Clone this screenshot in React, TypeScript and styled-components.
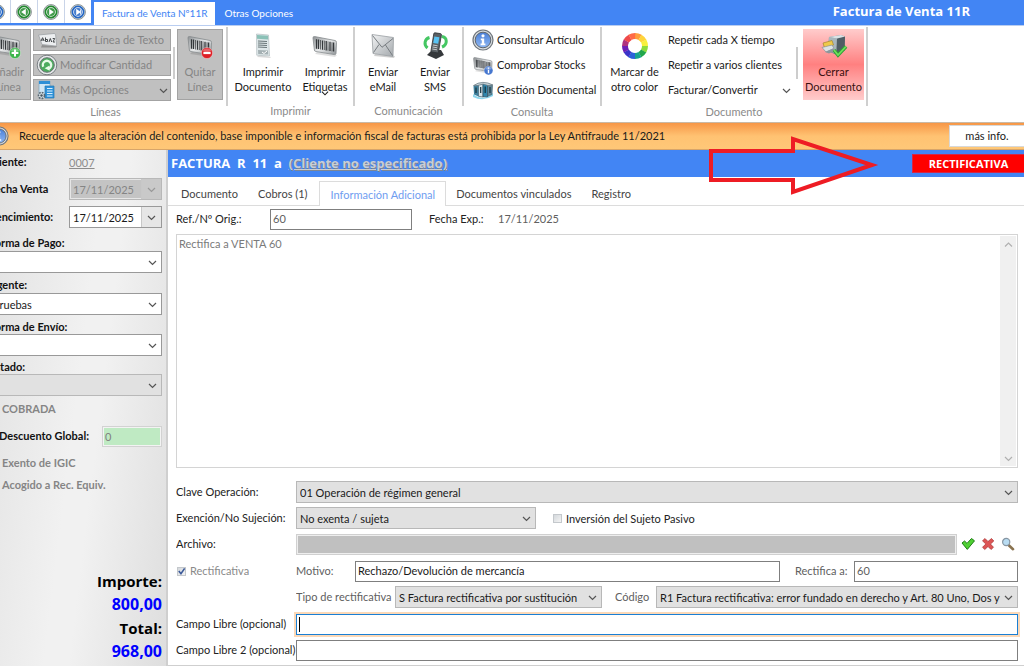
import React from "react";
import styled, { createGlobalStyle, css } from "styled-components";

const GlobalStyle = createGlobalStyle`
  *, *::before, *::after { box-sizing: border-box; }
  html, body { margin: 0; padding: 0; }
  body {
    overflow-x: hidden;
    background: #fff;
    color: #1a1a1a;
    font-family: Lato, "Open Sans", sans-serif;
    font-size: 11px;
    line-height: 15px;
  }
  button, input, select, textarea { font: inherit; color: inherit; border-radius: 0; margin: 0; }
  button { padding: 0; border: 0; background: none; white-space: nowrap; }
  svg { display: block; flex: none; }
`;

/* The window is scrolled slightly to the right: its left edge lies off screen. */
const Shell = styled.div`
  display: flex;
  flex-direction: column;
  min-height: 100vh;
  margin-left: -15px;
  overflow: hidden;
`;

/* ---------- title bar ---------- */
const TitleBar = styled.header`
  display: flex;
  height: 25px;
  background: #4285f4;
  color: #fff;
`;
const NavCells = styled.nav`
  display: flex;
  gap: 1px;
  height: 23px;
  background: #c9d4e8;
  margin: 0 3px 0 -1px;
`;
const NavCell = styled.button`
  display: flex;
  align-items: center;
  justify-content: center;
  width: 26px;
  background: #fff;
`;
const TopTab = styled.button<{ $active?: boolean }>`
  margin-top: 2px;
  font-size: 10px;
  ${(p) => (p.$active ? css`padding: 0 8px; background: #fff; color: #4285f4;` : css`padding: 0 9px; color: #fff;`)}
`;
const WindowTitle = styled.h1`
  margin: 0 54px 0 auto;
  font: bold 13px/23px "Open Sans", sans-serif;
`;

/* ---------- ribbon ---------- */
const Ribbon = styled.div`
  display: flex;
  height: 97px;
  background: #fff;
  border-top: 1px solid #b9cdf0;
`;
const Group = styled.section<{ $w: number }>`
  display: flex;
  flex-direction: column;
  width: ${(p) => p.$w}px;
  flex: none;
`;
const GroupBody = styled.div<{ $pad?: number; $gap?: number }>`
  display: flex;
  gap: ${(p) => p.$gap ?? 2}px;
  height: 75px;
  padding: 3px 0 0 ${(p) => p.$pad ?? 0}px;
`;
const GroupName = styled.h2`
  margin: 0;
  font-size: 11px;
  font-weight: normal;
  line-height: 22px;
  color: #8a8a8a;
  text-align: center;
`;
const Separator = styled.div`
  width: 2px;
  height: 79px;
  margin-top: 1px;
  background: #cfcfcf;
  flex: none;
`;
const BigButton = styled.button<{ $w: number; $tone?: "disabled" | "danger" }>`
  position: relative;
  display: flex;
  flex-direction: column;
  align-items: center;
  width: ${(p) => p.$w}px;
  height: 71px;
  padding-top: 3px;
  gap: 4px;
  flex: none;
  ${(p) =>
    p.$tone === "disabled" &&
    css`
      background: #c0c0c0;
      border: 1px solid #a3a3a3;
      color: #858585;
      padding-top: 2px;
    `}
  ${(p) =>
    p.$tone === "danger" &&
    css`
      background: linear-gradient(#ffcccc, #ff8080 50%, #ffcccc);
      color: #3a1010;
    `}
`;
const DropMark = styled.span`
  position: absolute;
  left: 50%;
  top: 60px;
  margin-left: -4px;
`;
const Stack = styled.div<{ $w?: number }>`
  display: flex;
  flex-direction: column;
  gap: 3px;
  width: ${(p) => (p.$w ? p.$w + "px" : "auto")};
`;
const RowButton = styled.button<{ $disabled?: boolean }>`
  display: flex;
  align-items: center;
  gap: 3px;
  height: 22px;
  text-align: left;
  ${(p) =>
    p.$disabled &&
    css`
      background: #c0c0c0;
      border: 1px solid #a3a3a3;
      color: #858585;
      padding: 0 2px;
      gap: 2px;
    `}
`;
const RowText = styled.span`
  padding-bottom: 2px;
`;
const Push = styled.span`
  margin-left: auto;
  color: #555;
`;
const MiniScroll = styled.div`
  width: 2px;
  height: 32px;
  margin-top: 18px;
  background: #cdcdcd;
  flex: none;
`;

/* ---------- notice ---------- */
const Notice = styled.div`
  display: flex;
  align-items: center;
  height: 28px;
  border-top: 1px solid #c9b9a6;
  border-bottom: 1px solid #d8a569;
  background: linear-gradient(#f79646, #ffc272 50%, #ffc878);
  padding-left: 4px;
  gap: 10px;
`;
const NoticeText = styled.p`
  margin: 0;
  padding-bottom: 2px;
  white-space: nowrap;
`;
const MoreInfo = styled.button`
  margin-left: auto;
  width: 75px;
  height: 22px;
  padding-bottom: 2px;
  background: #fff;
  border: 1px solid #d8d8d8;
  border-right: 0;
`;

/* ---------- columns ---------- */
const Columns = styled.div`
  display: flex;
  flex: 1;
`;
const Sidebar = styled.aside`
  display: flex;
  flex-direction: column;
  width: 183px;
  flex: none;
  padding: 1px 4px 3px 4px;
  background: linear-gradient(97deg, #e0e0e0, #f1f1f1 50%, #f1f1f1 60%, #dedede);
  border-right: 2px solid #cfcfcf;
`;
const SideRow = styled.div<{ $h: number; $indent?: number }>`
  display: flex;
  align-items: center;
  height: ${(p) => p.$h}px;
  padding-left: ${(p) => p.$indent ?? 0}px;
`;
const SideLabel = styled.label<{ $w?: number; $h?: number }>`
  font-weight: bold;
  color: #111;
  white-space: nowrap;
  width: ${(p) => (p.$w ? p.$w + "px" : "auto")};
  line-height: ${(p) => p.$h ?? 16}px;
  flex: none;
`;
const ClientLink = styled.a`
  color: #8c8c8c;
`;
const Fields = styled.div`
  display: flex;
  flex-direction: column;
  gap: 4px;
  padding-top: 6px;
`;
const SideField = styled.div`
  display: flex;
  flex-direction: column;
`;
const SideCheck = styled.label<{ $h: number }>`
  display: flex;
  align-items: center;
  height: ${(p) => p.$h}px;
  color: #858585;
  font-weight: bold;
  gap: 4px;
`;
const Discount = styled.input`
  width: 60px;
  height: 21px;
  margin-left: auto;
  padding: 0 2px;
  border: 1px solid #d2d2d2;
  outline: 0;
  box-shadow: inset 0 0 0 1px #f3f3f3;
  background: #bfeac3;
  color: #808080;
`;
const Totals = styled.dl`
  margin: auto 0 0;
  text-align: right;
  font: bold 16px/24px "Open Sans", sans-serif;
  color: #000;
`;
const Term = styled.dt`
  font-size: 15px;
`;
const Amount = styled.dd`
  margin: 0;
  color: #0000ff;
  line-height: 23px;
`;

/* ---------- document ---------- */
const Doc = styled.main`
  position: relative;
  display: flex;
  flex-direction: column;
  flex: 1;
  min-width: 0;
`;
const DocHeader = styled.div`
  display: flex;
  align-items: center;
  height: 27px;
  padding-left: 3px;
  background: #4285f4;
  color: #fff;
  font: bold 13px/27px "Open Sans", sans-serif;
  white-space: pre;
`;
const DocClient = styled.a`
  color: #c8cdd6;
  text-shadow: 1px 1px 0 #7e8794;
`;
const Badge = styled.strong`
  margin-left: auto;
  width: 112px;
  height: 19px;
  background: #ff0000;
  border: 1px solid #d0284a;
  border-right: 0;
  font: bold 11px/17px "Open Sans", sans-serif;
  text-align: center;
`;
const Arrow = styled.svg`
  position: absolute;
  right: 144px;
  top: -16px;
`;
const Tabs = styled.div`
  display: flex;
  height: 29px;
  padding-top: 4px;
  border-bottom: 1px solid #dcdcdc;
`;
const Tab = styled.button<{ $active?: boolean }>`
  height: 25px;
  padding: 0 10px;
  color: #444;
  ${(p) =>
    p.$active &&
    css`
      background: #fff;
      color: #6f9df0;
      border: 1px solid #dcdcdc;
      border-bottom: 0;
    `}
`;
const Pane = styled.div`
  display: flex;
  flex-direction: column;
  flex: 1;
  padding: 2px 6px 4px 8px;
  border-bottom: 1px solid #cfcfcf;
`;
const Line = styled.div`
  display: flex;
  align-items: center;
  height: 22px;
`;
const Caption = styled.label<{ $w?: number; $soft?: boolean }>`
  width: ${(p) => (p.$w ? p.$w + "px" : "auto")};
  flex: none;
  padding-bottom: 2px;
  white-space: nowrap;
  overflow: hidden;
  color: ${(p) => (p.$soft ? "#606060" : "#222")};
`;
const Input = styled.input<{ $w?: number; $focus?: boolean; $archive?: boolean; $soft?: boolean }>`
  ${(p) => (p.$w ? `width: ${p.$w}px; flex: none;` : "flex: 1; min-width: 0; width: 100%;")}
  height: 21px;
  padding: 0 2px 2px;
  border: 1px solid #7f7f7f;
  background: #fff;
  outline: 0;
  color: ${(p) => (p.$soft ? "#606060" : "#1a1a1a")};
  ${(p) => p.$focus && css`border-color: #1a7fd4; box-shadow: 0 0 0 2px #fcd9b8;`}
  ${(p) => p.$archive && css`border-color: #d0d0d0; background: #c0c0c0; box-shadow: inset 0 0 0 1px #eee;`}
`;
const CaretBox = styled.div`
  position: relative;
  display: flex;
  flex: 1;
  &::after {
    content: "";
    position: absolute;
    left: 3px;
    top: 3px;
    width: 1px;
    height: 15px;
    background: #000;
  }
`;
const SelectBox = styled.div<{ $w?: number; $look?: "flat" | "white" | "off" | "date" | "dateOff" }>`
  position: relative;
  display: flex;
  ${(p) => (p.$w ? `width: ${p.$w}px; flex: none;` : "flex: 1 1 auto; min-width: 0;")}
  select {
    appearance: none;
    width: 100%;
    height: 22px;
    padding: 0 16px 0 3px;
    outline: 0;
    opacity: 1;
    border: 1px solid ${(p) => (p.$look === "white" || p.$look === "date" ? "#999" : "#b8b8b8")};
    background: ${(p) => (p.$look === "white" || p.$look === "date" ? "#fff" : p.$look === "dateOff" ? "#c4c4c4" : "#e1e1e1")};
    color: ${(p) => (p.$look === "dateOff" ? "#858585" : "#1a1a1a")};
    ${(p) => p.$look === "dateOff" && css`box-shadow: inset 0 0 0 1px #e6e6e6;`}
  }
`;
const SelectMark = styled.span<{ $boxed?: boolean; $off?: boolean }>`
  position: absolute;
  right: 1px;
  top: 1px;
  display: flex;
  align-items: center;
  justify-content: center;
  width: 17px;
  height: 20px;
  pointer-events: none;
  color: ${(p) => (p.$off ? "#999" : "#555")};
  ${(p) => p.$boxed && css`width: 20px; border-left: 1px solid #c8c8c8; background: ${p.$off ? "#c9c9c9" : "#e6e6e6"};`}
`;
const NoteBox = styled.div`
  display: flex;
  flex: 1;
  margin: 4px 0 13px;
  border: 1px solid #d4d4d4;
`;
const Note = styled.textarea`
  flex: 1;
  resize: none;
  overflow: hidden;
  border: 0;
  outline: 0;
  padding: 1px 2px;
  color: #7a7a7a;
`;
const ScrollTrack = styled.div`
  display: flex;
  flex-direction: column;
  justify-content: space-between;
  width: 16px;
  margin: 1px;
  background: #f0f0f0;
  color: #b0b0b0;
`;
const ScrollButton = styled.button`
  display: flex;
  align-items: center;
  justify-content: center;
  height: 16px;
`;
const Form = styled.form`
  display: flex;
  flex-direction: column;
  gap: 5px;
`;
const FormGroup = styled.div`
  display: flex;
  flex-direction: column;
  gap: 4px;
`;
const Tick = styled.input`
  appearance: none;
  width: 9px;
  height: 9px;
  flex: none;
  border: 1px solid #c4c8cc;
  background: linear-gradient(135deg, #d4d8dc, #f4f4f4);
`;
const TickLabel = styled.label<{ $soft?: boolean; $w?: number }>`
  display: flex;
  align-items: center;
  gap: 4px;
  flex: none;
  width: ${(p) => (p.$w ? p.$w + "px" : "auto")};
  padding-left: ${(p) => (p.$soft ? 1 : 0)}px;
  color: ${(p) => (p.$soft ? "#8a8a8a" : "#222")};
`;
const TickBox = styled.span`
  position: relative;
  display: flex;
`;
const TickMark = styled.svg`
  position: absolute;
  left: 0;
  top: 0;
  pointer-events: none;
`;
const IconButtons = styled.div`
  display: flex;
  gap: 6px;
  padding: 0 3px 0 4px;
`;
const Gap = styled.span<{ $w: number }>`
  width: ${(p) => p.$w}px;
  flex: none;
`;

/* ---------- icons ---------- */
const Chevron = ({ up, size = 9 }: { up?: boolean; size?: number }) => (
  <svg width={size} height={size} viewBox="0 0 9 9" fill="none" stroke="currentColor" strokeWidth="1.2">
    <path d={up ? "M1 6.5 4.5 3 8 6.5" : "M1 3 4.5 6.5 8 3"} />
  </svg>
);

const NavIcon = ({ color, dir, bar }: { color: string; dir: "l" | "r"; bar?: boolean }) => (
  <svg width="18" height="18" viewBox="0 0 18 18">
    <circle cx="9" cy="9" r="7.4" fill="#d3dad6" stroke="#8d9496" strokeWidth="1" />
    <circle cx="9" cy="9" r="5.6" fill="#fff" stroke={color} strokeWidth="1.7" />
    <circle cx="9" cy="9" r="4" fill={color} fillOpacity=".85" />
    <path d={dir === "l" ? "M10.8 5.8v6.4L6.2 9z" : "M7.2 5.8v6.4l4.6-3.2z"} fill="#fff" />
    {bar && <path d={dir === "l" ? "M6.3 6.4v5.2" : "M11.7 6.4v5.2"} stroke="#fff" />}
  </svg>
);

const Barcode = ({ badge, w = 28 }: { badge?: "plus" | "minus" | "info"; w?: number }) => (
  <svg width={w} height={w} viewBox="0 0 28 28">
    <defs>
      <linearGradient id="bc" x1="0" y1="0" x2="1" y2="1">
        <stop offset="0" stopColor="#8b8f92" />
        <stop offset=".5" stopColor="#e8eaeb" />
        <stop offset="1" stopColor="#8f9497" />
      </linearGradient>
    </defs>
    <path d="M4 22 24 25l2-2-20-3z" fill="#000" opacity=".12" />
    <path d="M3.5 4.5 24 8.5q1.6.4 1.5 2l-.5 11q-.2 1.300-1.600 1.100L4.800 19.500q-1.300-.2-1.400-1.500L2 6q-.1-1.700 1.500-1.500z" fill="url(#bc)" stroke="#84898c" strokeWidth=".8" />
    <g stroke="#33373a" strokeWidth="1.300">
      <path d="M5.500 7.200v9.600M7.500 7.600v9.500M11.500 8.400v9.300M15.200 9v9.400M19 9.800v9.200" />
      <path d="M9.500 8v9.500M13.400 8.700v9.300M17 9.400v9.300M21 10.200v9.200" strokeWidth=".7" />
      <path d="M22.600 10.500v9" />
    </g>
    {badge && (
      <g>
        <circle cx="21" cy="21" r="5.600" fill={badge === "plus" ? "#3cb54a" : badge === "minus" ? "#dd1f26" : "#4677cf"} stroke="#fff" strokeOpacity=".6" strokeWidth=".6" />
        <path d="M16.600 19a5 5 0 0 1 8.800 0q-4.400 2-8.800 0z" fill="#fff" opacity=".3" />
        {badge === "plus" && <path d="M21 17.600v6.800M17.600 21h6.800" stroke="#fff" strokeWidth="2" />}
        {badge === "minus" && <path d="M17.400 21h7.200" stroke="#fff" strokeWidth="2.200" />}
        {badge === "info" && <path d="M21 20v4.500M21 17.200v1.600" stroke="#fff" strokeWidth="1.800" />}
      </g>
    )}
  </svg>
);

const InfoIcon = ({ size = 22 }: { size?: number }) => (
  <svg width={size} height={size} viewBox="0 0 22 22">
    <defs>
      <linearGradient id="inf" x1="0" y1="0" x2="0" y2="1">
        <stop offset="0" stopColor="#4a7fd6" />
        <stop offset="1" stopColor="#8fb8f4" />
      </linearGradient>
    </defs>
    <circle cx="11" cy="11" r="10" fill="#d8dcdf" stroke="#6f757b" strokeWidth="1.200" />
    <circle cx="11" cy="11" r="7.800" fill="url(#inf)" stroke="#60676e" />
    <circle cx="11" cy="6.800" r="1.600" fill="#fff" />
    <path d="M8.800 9.600h3.400v5h1.200v1.600H8.600v-1.600h1.200v-3.400h-1z" fill="#fff" />
  </svg>
);

const TextLineIcon = () => (
  <svg width="22" height="18" viewBox="0 0 22 18">
    <path d="M5 16.500h15l1-1.500-15-1z" fill="#000" opacity=".25" />
    <path d="M2.500 4 18 2.500q1.500 0 1.600 1.200l1 10.300q0 1-1.200 1L6 13.500z" fill="#eceef0" stroke="#9da1a4" strokeWidth=".8" />
    <path d="m5 10 1.600-3.300L8.200 10M5.700 9h2M9.500 6.500v4M9.500 8.500h2v2h-2M13 11l1.300-3.500 1.400 3.500M16.700 7.500h2L17 11h2" stroke="#44484b" fill="none" />
  </svg>
);

const ModifyIcon = () => (
  <svg width="22" height="22" viewBox="0 0 22 22">
    <circle cx="11" cy="11" r="9.800" fill="#e6e9ea" stroke="#7b8085" />
    <circle cx="11" cy="11" r="7.300" fill="#4cab5e" stroke="#6d7377" />
    <path d="M7.200 12.800A4.200 4.200 0 1 1 13 14.700" fill="none" stroke="#e8fbe9" strokeWidth="2.400" />
    <path d="m8.600 14.200 5-2.800v5.400z" fill="#e8fbe9" />
  </svg>
);

const OptionsIcon = () => (
  <svg width="22" height="20" viewBox="0 0 22 20">
    <path d="M3 1h11v14H3z" fill="#cfe6f5" stroke="#7ea3bd" strokeWidth=".7" />
    <path d="M3 1h11v3H3z" fill="#2d8fd6" />
    <path d="M9 6h9v12H9z" fill="#2f93da" stroke="#2278b5" strokeWidth=".7" />
    <path d="M11 8.500h5.500M11 11h5.500M11 13.500h5.500M11 16h5.500" stroke="#d9efff" />
    <circle cx="5.500" cy="15.500" r="3" fill="#d9e2e8" stroke="#596872" strokeWidth="1.600" strokeDasharray="1.800 1" />
    <circle cx="5.500" cy="15.500" r="1.200" fill="#47545c" />
  </svg>
);

const DocumentIcon = () => (
  <svg width="28" height="28" viewBox="0 0 28 28">
    <path d="m8 25 13 1 1-1-12-2z" fill="#000" opacity=".15" />
    <path d="m7.500 2 12 1 1 21-12.800-.8z" fill="#dfe8ea" stroke="#b4bfc2" strokeWidth=".7" />
    <path d="m8 3 11 .8.200 3.700L8 6.800z" fill="#8bc1b7" />
    <path d="m9 9 9 .5M9 11l9 .5M9 13l9 .5m-9 1.500 9 .5" stroke="#6a7679" strokeWidth="1.200" />
    <path d="m9 18 10 .5.200 4-10-.5z" fill="#a5b1b4" />
    <path d="m13 20 2 1.500 3-2.500" stroke="#fff" fill="none" />
  </svg>
);

const MailIcon = () => (
  <svg width="28" height="28" viewBox="0 0 28 28">
    <defs>
      <linearGradient id="ml" x1="0" y1="0" x2="1" y2="1">
        <stop offset="0" stopColor="#f2f3f4" />
        <stop offset="1" stopColor="#a4a9ad" />
      </linearGradient>
    </defs>
    <path d="m5 24 20 2 1-2-20-2z" fill="#000" opacity=".18" />
    <path d="m3 2.500 21.500 3-.5 19L4 21.500z" fill="url(#ml)" stroke="#9a9fa3" strokeWidth=".8" />
    <path d="m3.500 3.500 9.500 11.800L24 6.500M4.500 20.500l5.500-8M23.500 23.500l-7-10.500" fill="none" stroke="#777c80" />
  </svg>
);

const PhoneIcon = () => (
  <svg width="28" height="28" viewBox="0 0 28 28">
    <path d="M8.500 5.500C3.500 7 2.500 12.500 6.500 16M20.500 4.500c6 .5 6.500 8 .5 10.500" fill="none" stroke="#45c763" strokeWidth="3" />
    <path d="m6 23 5-5h9l3 5-8 4z" fill="#35383b" />
    <path d="m14 .8 5.500.8q1 .2.900 1.200L17.500 20q-.2 1-1.200.9l-5.500-1q-1-.2-.8-1.200L12.800 1.700q.2-1 1.200-.9z" fill="#5a6064" stroke="#2c3033" strokeWidth=".8" />
    <path d="m13.400 4.500 5 .8-1.200 6.500-5-.8z" fill="#59c3f3" />
    <path d="m11.800 13 4.800.8m-5.100 1.200 4.800.8m-5 1.200 4.700.8" stroke="#c2c8cc" strokeWidth="1" />
  </svg>
);

const BindersIcon = () => (
  <svg width="22" height="20" viewBox="0 0 22 20">
    <path d="M1 14q10 8 20-1v3q-10 6-20 1z" fill="#6fcbe9" opacity=".8" />
    <path d="m1.500 6 5-1.500v12L2 14.500z" fill="#3f7f9b" />
    <path d="m6.500 4.500 4.500-1v13.500l-4.500-.7z" fill="#d6e4ea" stroke="#345b6e" strokeWidth=".7" />
    <path d="M11 3.500h4.500v13.300H11z" fill="#2e86ad" stroke="#2a4b5b" strokeWidth=".7" />
    <path d="m15.500 3.500 5 2-.5 9-4.500 2z" fill="#5f8596" stroke="#2a4b5b" strokeWidth=".5" />
    <path d="M8.700 7v6M13.200 6.500v6.500M18 7v6M4 7.500V13" stroke="#16313d" strokeWidth="1.200" />
    <path d="M1.500 5.500q9-6 19.500-.5l-5 .5-5-1.500-5 1.500z" fill="#c8d4d9" stroke="#62737b" strokeWidth=".7" />
  </svg>
);

const wheel = ["#ff9f3c", "#ffd43b", "#f7f03c", "#8ddc3b", "#22a64b", "#16a38f", "#2b62d9", "#3a34c9", "#6d1fb5", "#b0317f", "#ef4a4a", "#ff6b47"];
const WheelIcon = () => (
  <svg width="28" height="28" viewBox="0 0 28 28">
    {wheel.map((c, i) => {
      const a = ((i * 30 - 90) * Math.PI) / 180;
      const b = (((i + 1) * 30 - 89) * Math.PI) / 180;
      return (
        <path
          key={c}
          d={`M${14 + 10 * Math.cos(a)} ${14 + 10 * Math.sin(a)}A10 10 0 0 1 ${14 + 10 * Math.cos(b)} ${14 + 10 * Math.sin(b)}`}
          stroke={c}
          strokeWidth="6"
          fill="none"
        />
      );
    })}
  </svg>
);

const CloseDocIcon = () => (
  <svg width="28" height="28" viewBox="0 0 28 28">
    <path d="m9 5 12-2 4 1.500-.5 14-9 4L8 19z" fill="#76858d" />
    <path d="m9 5 8 1.500-.5 15L8 19z" fill="#a9b6bc" />
    <path d="m17 6.500 8-2-.5 14-8 3z" fill="#505d64" />
    <path d="m9 5 12-2 4 1.500-8 2z" fill="#dbe2e5" />
    <path d="m3 11 9-2.500 1.500 4.500-9 3z" fill="#efc94a" stroke="#9b7e24" strokeWidth=".6" />
    <path d="m2 15.500 10-2.500 2 3.500-8 3.500z" fill="#dde3e5" stroke="#7c878d" strokeWidth=".6" />
    <path d="m5 20 8-3.500 2 2-6 3z" fill="#8b979d" />
    <path d="m14 18 4 5L26 14.500" fill="none" stroke="#2f9e35" strokeWidth="3.600" />
    <path d="m14 18 4 5L26 14.500" fill="none" stroke="#6fe05c" strokeWidth="1.800" />
  </svg>
);

const CheckIcon = () => (
  <svg width="14" height="14" viewBox="0 0 14 14">
    <path d="M1 6 3.600 4l2.400 2.400L10.500 1.500l3 2.300-7.200 8.600z" fill="#4fd033" stroke="#1c7d14" />
  </svg>
);
const CrossIcon = () => (
  <svg width="14" height="14" viewBox="0 0 14 14">
    <path d="M1.500 3.800 4 1.500 7 4.500l3.500-3L12.800 4 9.500 7l3 3.300-2.500 2.200-3-3-3.200 3-2.300-2.200L4.800 7z" fill="#dd5555" stroke="#a83232" strokeWidth=".7" />
  </svg>
);
const LensIcon = () => (
  <svg width="14" height="14" viewBox="0 0 14 14">
    <path d="m7.500 8 4.500 4.200" stroke="#8a7350" strokeWidth="2.600" strokeLinecap="round" />
    <circle cx="5.200" cy="5" r="3.600" fill="#b9dcf2" stroke="#8796a3" strokeWidth="1.200" />
  </svg>
);

type Look = "flat" | "white" | "off" | "date" | "dateOff";
const Select = ({ id, value, w, look = "flat" }: { id: string; value: string; w?: number; look?: Look }) => (
  <SelectBox $w={w} $look={look}>
    <select id={id} defaultValue={value} disabled={look === "off" || look === "dateOff"}>
      <option value={value}>{value}</option>
    </select>
    <SelectMark $boxed={look === "date" || look === "dateOff"} $off={look === "dateOff"}>
      <Chevron />
    </SelectMark>
  </SelectBox>
);

export default function App() {
  return (
    <>
      <GlobalStyle />
      <Shell>
        <TitleBar>
          <NavCells>
            <NavCell aria-label="Primero"><NavIcon color="#2466c4" dir="l" bar /></NavCell>
            <NavCell aria-label="Anterior"><NavIcon color="#238a2e" dir="l" /></NavCell>
            <NavCell aria-label="Siguiente"><NavIcon color="#238a2e" dir="r" /></NavCell>
            <NavCell aria-label="Último"><NavIcon color="#2466c4" dir="r" bar /></NavCell>
          </NavCells>
          <TopTab $active>Factura de Venta Nº11R</TopTab>
          <TopTab>Otras Opciones</TopTab>
          <WindowTitle>Factura de Venta 11R</WindowTitle>
        </TitleBar>

        <Ribbon>
          <Group $w={241}>
            <GroupBody>
              <BigButton $w={46} $tone="disabled"><Barcode badge="plus" /><span>Añadir<br />Línea</span></BigButton>
              <Stack $w={138}>
                <RowButton $disabled><TextLineIcon /><RowText>Añadir Línea de Texto</RowText></RowButton>
                <RowButton $disabled><ModifyIcon /><RowText>Modificar Cantidad</RowText></RowButton>
                <RowButton $disabled><OptionsIcon /><RowText>Más Opciones</RowText><Push><Chevron /></Push></RowButton>
              </Stack>
              <MiniScroll />
              <BigButton $w={46} $tone="disabled"><Barcode badge="minus" /><span>Quitar<br />Línea</span></BigButton>
            </GroupBody>
            <GroupName>Líneas</GroupName>
          </Group>
          <Separator />
          <Group $w={125}>
            <GroupBody $pad={4}>
              <BigButton $w={62}><DocumentIcon /><span>Imprimir<br />Documento</span></BigButton>
              <BigButton $w={58}><Barcode /><span>Imprimir<br />Etiquetas</span><DropMark><Chevron size={8} /></DropMark></BigButton>
            </GroupBody>
            <GroupName>Imprimir</GroupName>
          </Group>
          <Separator />
          <Group $w={107}>
            <GroupBody $pad={3}>
              <BigButton $w={50}><MailIcon /><span>Enviar<br />eMail</span></BigButton>
              <BigButton $w={50}><PhoneIcon /><span>Enviar<br />SMS</span></BigButton>
            </GroupBody>
            <GroupName>Comunicación</GroupName>
          </Group>
          <Separator />
          <Group $w={136}>
            <GroupBody $pad={8}>
              <Stack>
                <RowButton><InfoIcon /><RowText>Consultar Artículo</RowText></RowButton>
                <RowButton><Barcode badge="info" w={22} /><RowText>Comprobar Stocks</RowText></RowButton>
                <RowButton><BindersIcon /><RowText>Gestión Documental</RowText></RowButton>
              </Stack>
            </GroupBody>
            <GroupName>Consulta</GroupName>
          </Group>
          <Separator />
          <Group $w={264}>
            <GroupBody $pad={4} $gap={5}>
              <BigButton $w={57}><WheelIcon /><span>Marcar de<br />otro color</span></BigButton>
              <Stack $w={123}>
                <RowButton><RowText>Repetir cada X tiempo</RowText></RowButton>
                <RowButton><RowText>Repetir a varios clientes</RowText></RowButton>
                <RowButton><RowText>Facturar/Convertir</RowText><Push><Chevron /></Push></RowButton>
              </Stack>
              <MiniScroll />
              <BigButton $w={61} $tone="danger"><CloseDocIcon /><span>Cerrar<br />Documento</span></BigButton>
            </GroupBody>
            <GroupName>Documento</GroupName>
          </Group>
          <Separator />
        </Ribbon>

        <Notice>
          <InfoIcon size={20} />
          <NoticeText>
            Recuerde que la alteración del contenido, base imponible e información fiscal de facturas está prohibida por la Ley Antifraude 11/2021
          </NoticeText>
          <MoreInfo>más info.</MoreInfo>
        </Notice>

        <Columns>
          <Sidebar>
            <SideRow $h={22}>
              <SideLabel as="span" $w={80}>Cliente:</SideLabel>
              <ClientLink href="#cliente">0007</ClientLink>
            </SideRow>
            <SideRow $h={32}>
              <SideLabel htmlFor="fecha" $w={80}>Fecha Venta</SideLabel>
              <Select id="fecha" value="17/11/2025" look="dateOff" />
            </SideRow>
            <SideRow $h={24}>
              <SideLabel htmlFor="venc" $w={80}>Vencimiento:</SideLabel>
              <Select id="venc" value="17/11/2025" look="date" />
            </SideRow>
            <Fields>
              <SideField><SideLabel htmlFor="pago">Forma de Pago:</SideLabel><Select id="pago" value="" look="white" /></SideField>
              <SideField><SideLabel htmlFor="agente">Agente:</SideLabel><Select id="agente" value="Pruebas" look="white" /></SideField>
              <SideField><SideLabel htmlFor="envio" $h={15}>Forma de Envío:</SideLabel><Select id="envio" value="" look="white" /></SideField>
              <SideField><SideLabel htmlFor="estado" $h={14}>Estado:</SideLabel><Select id="estado" value="" look="off" /></SideField>
            </Fields>
            <SideCheck $h={24}><Tick type="checkbox" disabled />COBRADA</SideCheck>
            <SideRow $h={32} $indent={10}>
              <SideLabel htmlFor="dto">Descuento Global:</SideLabel>
              <Discount id="dto" defaultValue="0" />
            </SideRow>
            <SideCheck $h={20}><Tick type="checkbox" disabled />Exento de IGIC</SideCheck>
            <SideCheck $h={24}><Tick type="checkbox" disabled />Acogido a Rec. Equiv.</SideCheck>
            <Totals>
              <Term>Importe:</Term>
              <Amount>800,00</Amount>
              <Term>Total:</Term>
              <Amount>968,00</Amount>
            </Totals>
          </Sidebar>

          <Doc>
            <DocHeader>
              <span>{"FACTURA  R  11  a  "}</span>
              <DocClient href="#cliente">(Cliente no especificado)</DocClient>
              <Badge>RECTIFICATIVA</Badge>
            </DocHeader>
            <Arrow width="172" height="64" viewBox="0 0 172 64" fill="none" stroke="#ee1c24" strokeWidth="4">
              <path d="M3 17h82V5l79 26-79 27V46H3z" />
            </Arrow>
            <Tabs>
              <Gap $w={3} />
              <Tab>Documento</Tab>
              <Tab>Cobros (1)</Tab>
              <Gap $w={2} />
              <Tab $active>Información Adicional</Tab>
              <Tab>Documentos vinculados</Tab>
              <Tab>Registro</Tab>
            </Tabs>
            <Pane>
              <Line>
                <Caption htmlFor="ref" $w={94}>Ref./Nº Orig.:</Caption>
                <Input id="ref" $w={142} $soft defaultValue="60" />
                <Gap $w={17} />
                <Caption as="span" $w={69}>Fecha Exp.:</Caption>
                <Caption as="span" $soft>17/11/2025</Caption>
              </Line>
              <NoteBox>
                <Note aria-label="Observaciones" readOnly defaultValue="Rectifica a VENTA 60" />
                <ScrollTrack>
                  <ScrollButton aria-label="Subir"><Chevron up /></ScrollButton>
                  <ScrollButton aria-label="Bajar"><Chevron /></ScrollButton>
                </ScrollTrack>
              </NoteBox>
              <Form>
                <FormGroup>
                  <Line>
                    <Caption htmlFor="clave" $w={120}>Clave Operación:</Caption>
                    <Select id="clave" value="01 Operación de régimen general" />
                  </Line>
                  <Line>
                    <Caption htmlFor="exen" $w={120}>Exención/No Sujeción:</Caption>
                    <Select id="exen" w={240} value="No exenta / sujeta" />
                    <Gap $w={17} />
                    <TickLabel><Tick type="checkbox" />Inversión del Sujeto Pasivo</TickLabel>
                  </Line>
                  <Line>
                    <Caption htmlFor="archivo" $w={120}>Archivo:</Caption>
                    <Input id="archivo" $archive readOnly />
                    <IconButtons>
                      <button type="button" aria-label="Aceptar"><CheckIcon /></button>
                      <button type="button" aria-label="Borrar"><CrossIcon /></button>
                      <button type="button" aria-label="Ver"><LensIcon /></button>
                    </IconButtons>
                  </Line>
                </FormGroup>
                <FormGroup>
                  <Line>
                    <TickLabel $soft $w={120}>
                      <TickBox>
                        <Tick type="checkbox" defaultChecked disabled />
                        <TickMark width="9" height="9" viewBox="0 0 10 10" fill="none" stroke="#3c5a9a" strokeWidth="1.800">
                          <path d="m2 4.500 2.400 3L8.500 1.500" />
                        </TickMark>
                      </TickBox>
                      <RowText>Rectificativa</RowText>
                    </TickLabel>
                    <Caption htmlFor="motivo" $soft $w={59}>Motivo:</Caption>
                    <Input id="motivo" defaultValue="Rechazo/Devolución de mercancía" />
                    <Gap $w={15} />
                    <Caption htmlFor="recta" $soft $w={59}>Rectifica a:</Caption>
                    <Input id="recta" $w={164} $soft defaultValue="60" />
                  </Line>
                  <Line>
                    <Gap $w={120} />
                    <Caption htmlFor="tipo" $soft $w={99}>Tipo de rectificativa</Caption>
                    <Select id="tipo" w={207} value="S Factura rectificativa por sustitución" />
                    <Gap $w={13} />
                    <Caption htmlFor="codigo" $soft $w={41}>Código</Caption>
                    <Select id="codigo" value="R1 Factura rectificativa: error fundado en derecho y Art. 80 Uno, Dos y Seis LIVA" />
                  </Line>
                </FormGroup>
                <FormGroup>
                  <Line>
                    <Caption htmlFor="libre1" $w={120}>Campo Libre (opcional)</Caption>
                    <CaretBox><Input id="libre1" $focus /></CaretBox>
                  </Line>
                  <Line>
                    <Caption htmlFor="libre2" $w={120}>Campo Libre 2 (opcional)</Caption>
                    <Input id="libre2" />
                  </Line>
                </FormGroup>
              </Form>
            </Pane>
          </Doc>
        </Columns>
      </Shell>
    </>
  );
}
